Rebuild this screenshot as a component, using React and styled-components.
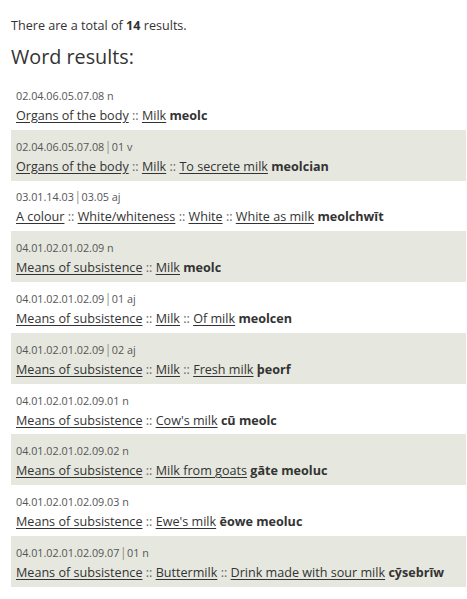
import React from "react";
import styled, { createGlobalStyle } from "styled-components";

const GlobalStyle = createGlobalStyle`
  body {
    margin: 0;
    background: #fff;
    font-family: "Open Sans", "Liberation Sans", sans-serif;
    color: #333;
  }
`;

const Page = styled.div`
  padding: 16px 1px 0 11px;
`;

const Total = styled.p`
  margin: 0;
  font-size: 12.6px;
  line-height: 20px;
`;

const Heading = styled.h2`
  margin: 7px 0 8px;
  font-size: 19.8px;
  font-weight: 400;
  line-height: 28px;
  color: #333;
`;

const ResultRow = styled.div`
  padding: 5.9px 5px 3.9px;
  background: ${(p) => (p.$shaded ? "#e6e8df" : "#fff")};
`;

const Code = styled.div`
  font-size: 10.8px;
  line-height: 21px;
  color: #555;
`;

const Pipe = styled.span`
  color: #8c8c7c;
  font-size: 12px;
  margin: 0 0.5px;
`;

const Words = styled.div`
  font-size: 12.6px;
  line-height: 20px;
  color: #333;
  white-space: nowrap;
`;

const Crumb = styled.a`
  color: #333;
  text-decoration: underline;
  text-underline-offset: 2px;
`;

const Sep = styled.span`
  color: #666;
`;

const Headword = styled.b`
  font-weight: 700;
  color: #333;
`;

const results = [
  { code: "02.04.06.05.07.08", sub: null, pos: "n", path: ["Organs of the body", "Milk"], word: "meolc" },
  { code: "02.04.06.05.07.08", sub: "01", pos: "v", path: ["Organs of the body", "Milk", "To secrete milk"], word: "meolcian" },
  { code: "03.01.14.03", sub: "03.05", pos: "aj", path: ["A colour", "White/whiteness", "White", "White as milk"], word: "meolchwīt" },
  { code: "04.01.02.01.02.09", sub: null, pos: "n", path: ["Means of subsistence", "Milk"], word: "meolc" },
  { code: "04.01.02.01.02.09", sub: "01", pos: "aj", path: ["Means of subsistence", "Milk", "Of milk"], word: "meolcen" },
  { code: "04.01.02.01.02.09", sub: "02", pos: "aj", path: ["Means of subsistence", "Milk", "Fresh milk"], word: "þeorf" },
  { code: "04.01.02.01.02.09.01", sub: null, pos: "n", path: ["Means of subsistence", "Cow's milk"], word: "cū meolc" },
  { code: "04.01.02.01.02.09.02", sub: null, pos: "n", path: ["Means of subsistence", "Milk from goats"], word: "gāte meoluc" },
  { code: "04.01.02.01.02.09.03", sub: null, pos: "n", path: ["Means of subsistence", "Ewe's milk"], word: "ēowe meoluc" },
  { code: "04.01.02.01.02.09.07", sub: "01", pos: "n", path: ["Means of subsistence", "Buttermilk", "Drink made with sour milk"], word: "cȳsebrīw" },
];

const App = () => {
  return (
    <>
      <GlobalStyle />
      <Page>
        <Total>
          There are a total of <b>14</b> results.
        </Total>
        <Heading>Word results:</Heading>
        {results.map((r, i) => (
          <ResultRow key={i} $shaded={i % 2 === 1}>
            <Code>
              {r.code}
              {r.sub && (
                <>
                  <Pipe>|</Pipe>
                  {r.sub}
                </>
              )}{" "}
              {r.pos}
            </Code>
            <Words>
              {r.path.map((p, j) => (
                <React.Fragment key={j}>
                  {j > 0 && <Sep> :: </Sep>}
                  <Crumb href="#">{p}</Crumb>
                </React.Fragment>
              ))}{" "}
              <Headword>{r.word}</Headword>
            </Words>
          </ResultRow>
        ))}
      </Page>
    </>
  );
};

export default App;
